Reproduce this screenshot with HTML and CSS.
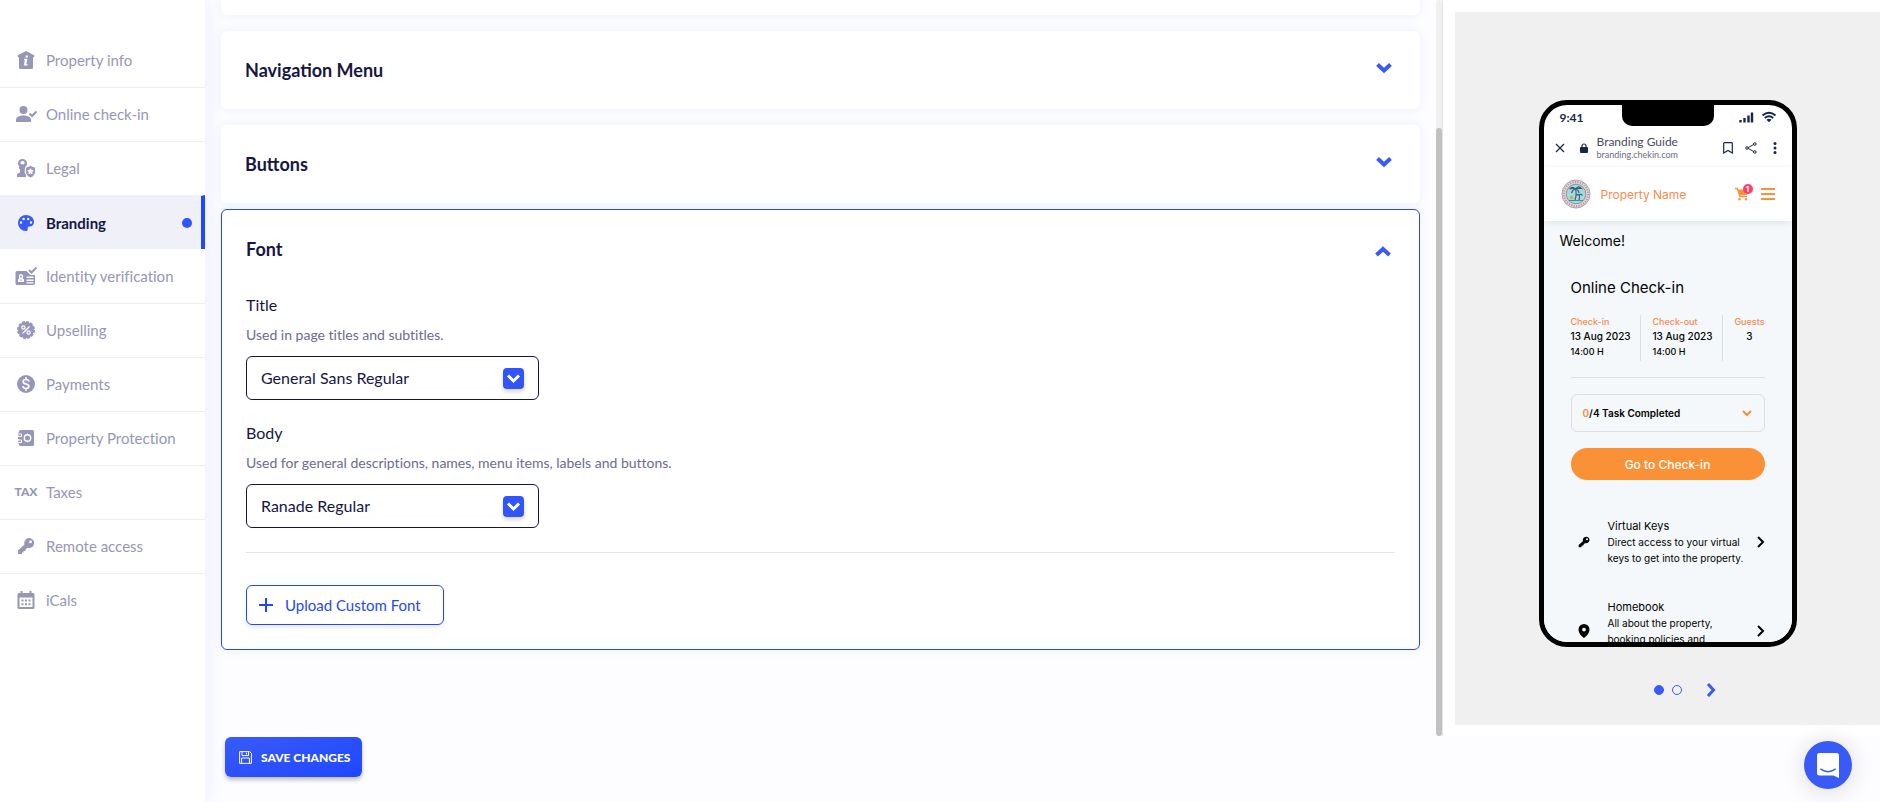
FILE: index.html
```html
<!DOCTYPE html>
<html lang="en">
<head>
    <meta charset="UTF-8">
    <meta name="viewport" content="width=device-width, initial-scale=1.0">
    <title>Branding</title>
    <link rel="stylesheet" href="styles.css">
</head>
<body>
    <nav class="sidebar">
        <a class="nav-item" href="#">
            <span class="nav-icon"><svg width="18" height="20" viewBox="0 0 18 20"><path fill="currentColor" fill-rule="evenodd" d="M9 1L0.800 5.200V7.200H2V17.500Q2 19 3.500 19H14.500Q16 19 16 17.500V7.200H17.200V5.200zM8.800 5.500h2.200l-.4 2H8.400zM7.200 8.700h3.300L9.400 14h1.200l-.3 1.500H6.800l1.100-5.300H6.900z"/></svg></span>
            Property info
        </a>
        <a class="nav-item" href="#">
            <span class="nav-icon"><svg width="22" height="18" viewBox="0 0 22 18"><circle cx="8.500" cy="5" r="4" fill="currentColor"/><path fill="currentColor" d="M1 17v-2c0-3 3-4.500 7.500-4.500S16 12 16 15v2z"/><path fill="none" stroke="currentColor" stroke-width="2" d="M14.500 8.500l2.500 2.500 4.500-4.500"/></svg></span>
            Online check-in
        </a>
        <a class="nav-item" href="#">
            <span class="nav-icon"><svg width="20" height="20" viewBox="0 0 20 20"><path fill="currentColor" fill-rule="evenodd" d="M6.500 1a4.600 4.600 0 0 1 4.600 4.500c0 1.500-.7 2.500-1.700 3.200L10 9v2H8.800v4l1.200 1v3H1v-3l3-1.500V11H3V9l.600-.3A4.400 4.400 0 0 1 1.900 5.500 4.600 4.600 0 0 1 6.500 1zm0 1.700L4.300 4l.5 2.300h3.400L8.700 4z"/><path fill="currentColor" stroke="#fff" fill-rule="evenodd" d="M14.500 7.500l5 1.900v4.300c0 3-2.200 5.200-5 6.200-2.800-1-5-3.200-5-6.200V9.400zm0 3.200l-.8 1.700-1.800.3 1.300 1.300-.3 1.800 1.600-.9 1.600.9-.3-1.800 1.300-1.300-1.800-.3z"/></svg></span>
            Legal
        </a>
        <a class="nav-item active" href="#">
            <span class="nav-icon"><svg width="18" height="18" viewBox="0 0 18 18"><path fill="currentColor" fill-rule="evenodd" d="M9 1c4.600 0 8 3 8 7 0 2.800-1.800 4.500-4.300 4.500-1.600 0-2.200.6-2 1.900.2 1.500-.2 2.600-1.700 2.600a8 8 0 0 1 0-16zM4 7.300a1.200 1.200 0 1 0 0 2.500 1.200 1.200 0 0 0 0-2.500zm2.600-3.600a1.200 1.200 0 1 0 0 2.500 1.200 1.200 0 0 0 0-2.500zm4.600 0a1.200 1.200 0 1 0 0 2.500 1.200 1.200 0 0 0 0-2.500zM14 7.300a1.200 1.200 0 1 0 0 2.500 1.200 1.200 0 0 0 0-2.500z"/></svg></span>
            Branding
            <span class="nav-dot"></span>
        </a>
        <a class="nav-item" href="#">
            <span class="nav-icon"><svg width="22" height="20" viewBox="0 0 22 20"><path fill="currentColor" fill-rule="evenodd" d="M2 5h9.500l4 4H20v8.500q0 1.500-1.500 1.500H2Q.500 19 .500 17.500v-11Q.500 5 2 5zm4 3a2.300 2.300 0 0 0-1.500 4L3 13.500V16h6v-2.500L7.500 12A2.300 2.300 0 0 0 6 8zm0 1.500a1 1 0 1 1 0 2 1 1 0 0 1 0-2zM4.500 14.500L6 13.200l1.500 1.300zM11.500 10.500V12h7v-1.500zm0 3V15h7v-1.500zm0 2.800v1.200h7v-1.200z"/><path fill="none" stroke="currentColor" stroke-width="2" d="M14 4l2.500 2.500L21.300 1.500"/></svg></span>
            Identity verification
        </a>
        <a class="nav-item" href="#">
            <span class="nav-icon"><svg width="20" height="20" viewBox="0 0 20 20"><circle cx="10" cy="10" r="8" fill="currentColor"/><circle cx="10" cy="10" r="7.800" fill="none" stroke="currentColor" stroke-width="2.400" stroke-dasharray="2.800 1.280"/><path d="M6.500 13.500l7-7" stroke="#fff" stroke-width="1.300"/><circle cx="7.400" cy="7.500" r="1.600" fill="none" stroke="#fff" stroke-width="1.200"/><circle cx="12.600" cy="12.500" r="1.600" fill="none" stroke="#fff" stroke-width="1.200"/></svg></span>
            Upselling
        </a>
        <a class="nav-item" href="#">
            <span class="nav-icon"><svg width="20" height="20" viewBox="0 0 20 20"><circle cx="10" cy="10" r="9" fill="currentColor"/><path d="M13 7.500C12.700 6 11.500 5.500 10 5.500S7.200 6.200 7.200 7.700c0 3.200 5.700 1.500 5.700 4.600 0 1.500-1.400 2.200-2.900 2.200s-2.900-.7-3.100-2.300M10 3.300v2.200M10 14.500v2.200" fill="none" stroke="#fff" stroke-width="1.700"/></svg></span>
            Payments
        </a>
        <a class="nav-item" href="#">
            <span class="nav-icon"><svg width="18" height="18" viewBox="0 0 18 18"><path fill="currentColor" d="M3.500 1H15.500Q17 1 17 2.500v13q0 1.500-1.500 1.500H3.500Q2 17 2 15.500V14.500H1v-3h1V10.500H1v-3h1V6.500H1v-3h1V2.500Q2 1 3.500 1z"/><circle cx="10.500" cy="9" r="3.200" fill="none" stroke="#fff" stroke-width="1.400"/><path stroke="#fff" fill="none" d="M10.500 4.500v1.500M10.500 12v1.500M1 5h3.500v2.500H1M1 11h3.500v2.500H1"/></svg></span>
            Property Protection
        </a>
        <a class="nav-item" href="#">
            <span class="nav-icon nav-icon-text">TAX</span>
            Taxes
        </a>
        <a class="nav-item" href="#">
            <span class="nav-icon"><svg width="18" height="18" viewBox="0 0 18 18"><path fill="currentColor" fill-rule="evenodd" d="M12 1a5 5 0 1 1-1.500 9.700L8.500 12.500V14H6.500v1.500H5V17H1v-3.500l6.500-6A5 5 0 0 1 12 1zm1.500 2.300a1.500 1.500 0 1 0 0 3 1.500 1.500 0 0 0 0-3z"/></svg></span>
            Remote access
        </a>
        <a class="nav-item" href="#">
            <span class="nav-icon"><svg width="18" height="20" viewBox="0 0 18 20"><path fill="currentColor" fill-rule="evenodd" d="M3.500 1h2v2h7V1h2v2H16q1.500 0 1.500 1.500v13Q17.500 19 16 19H2Q.500 19 .500 17.500v-13Q.500 3 2 3h1.500zM2.500 7.500V17h13V7.500z"/><path stroke="currentColor" stroke-width="2" stroke-dasharray="2 1.500" d="M4.500 10.500h9M4.500 14.200h9"/></svg></span>
            iCals
        </a>
    </nav>

    <div class="page">
        <div class="workspace">
            <main class="sections">
                <section class="card card-clipped"></section>
                <section class="card">
                    <button type="button" class="card-header">
                        Navigation Menu
                        <svg class="chevron" width="18" height="12" viewBox="0 0 18 12"><path d="M2.500 2.500L9 8.500l6.500-6"/></svg>
                    </button>
                </section>
                <section class="card">
                    <button type="button" class="card-header">
                        Buttons
                        <svg class="chevron" width="18" height="12" viewBox="0 0 18 12"><path d="M2.500 2.500L9 8.500l6.500-6"/></svg>
                    </button>
                </section>
                <section class="card card-open">
                    <button type="button" class="card-header">
                        Font
                        <svg class="chevron" width="18" height="12" viewBox="0 0 18 12"><path d="M2.500 10L9 4l6.500 6"/></svg>
                    </button>
                    <div class="card-body">
                        <div class="field">
                            <label for="title-font">Title</label>
                            <p class="hint">Used in page titles and subtitles.</p>
                            <div class="select">
                                <select id="title-font">
                                    <option>General Sans Regular</option>
                                </select>
                                <span class="select-arrow"><svg width="15" height="11" viewBox="0 0 15 11"><path d="M2 2.500l5.500 5.500L13 2.500"/></svg></span>
                            </div>
                        </div>
                        <div class="field">
                            <label for="body-font">Body</label>
                            <p class="hint">Used for general descriptions, names, menu items, labels and buttons.</p>
                            <div class="select">
                                <select id="body-font">
                                    <option>Ranade Regular</option>
                                </select>
                                <span class="select-arrow"><svg width="15" height="11" viewBox="0 0 15 11"><path d="M2 2.500l5.500 5.500L13 2.500"/></svg></span>
                            </div>
                        </div>
                        <hr class="divider">
                        <button type="button" class="upload-button">
                            <svg width="14" height="14" viewBox="0 0 14 14"><path d="M7 0v14M0 7h14" stroke="currentColor" stroke-width="2"/></svg>
                            Upload Custom Font
                        </button>
                    </div>
                </section>
            </main>
            <div class="scrollbar"><div class="scrollbar-thumb"></div></div>

            <aside class="preview">
                <div class="preview-stage">
                    <div class="phone">
                        <div class="notch"></div>
                        <div class="status-bar">
                            <span>9:41</span>
                            <svg width="38" height="12" viewBox="0 0 38 12"><path d="M1.500 11.500V9M5.500 11.500V7M9.500 11.500V4.500M13 11.500V1.500" stroke="#16264a" stroke-width="2.400" stroke-linecap="butt"/><path d="M23.500 4.500Q30 -1 36.500 4.500M25.800 7Q30 3.500 34.200 7" fill="none" stroke="#16264a" stroke-width="2"/><path d="M27.500 8.700Q30 6.800 32.500 8.700L30 11.300z" fill="#16264a"/></svg>
                        </div>
                        <div class="browser-bar">
                            <svg width="10" height="10" viewBox="0 0 10 10"><path d="M1 1l8 8M9 1L1 9" stroke="#16264a" stroke-width="1.200"/></svg>
                            <svg class="lock" width="8" height="10" viewBox="0 0 8 10"><rect y="4" width="8" height="6" rx="1" fill="#16264a"/><path d="M2 4.500V3a2 2 0 0 1 4 0v1.500" fill="none" stroke="#16264a" stroke-width="1.200"/></svg>
                            <div class="browser-title">
                                <div>Branding Guide</div>
                                <div class="browser-url">branding.chekin.com</div>
                            </div>
                            <svg width="10" height="12" viewBox="0 0 10 12"><path d="M.700 1.500Q.700.700 1.500.700h7q.8 0 .8.8v9.500L5 8.500.700 11z" fill="none" stroke="#16264a" stroke-width="1.200"/></svg>
                            <svg width="12" height="12" viewBox="0 0 12 12"><path d="M9.500 2L2.500 6l7 4" fill="none" stroke="#16264a"/><g fill="#fff" stroke="#16264a"><circle cx="9.800" cy="2" r="1.300"/><circle cx="2" cy="6" r="1.300"/><circle cx="9.800" cy="10" r="1.300"/></g></svg>
                            <svg class="kebab" width="4" height="12" viewBox="0 0 4 12"><g fill="#16264a"><circle cx="2" cy="1.600" r="1.500"/><circle cx="2" cy="6" r="1.500"/><circle cx="2" cy="10.400" r="1.500"/></g></svg>
                        </div>
                        <div class="property-bar">
                            <svg width="30" height="30" viewBox="0 0 30 30"><circle cx="15" cy="15" r="14" fill="#ecd3d4" stroke="#a3a6ae"/><circle cx="15" cy="15" r="12" fill="none" stroke="#b39aa4" stroke-width="2" stroke-dasharray="1.200 1.300"/><circle cx="15" cy="15" r="9.800" fill="#a3dadd" stroke="#7f9aa3"/><path d="M14 21q2-6 .5-11M14.500 10q-3-3-6 0 3-1 6 0M14.500 10q3-4 6-.5-3-.5-6 .5M14.500 10q-3 .5-4 4M14.500 10q3 .5 3.500 4M18 21q1-3 0-6M18 16q2-1.500 3.500.5M18 16q-2-1-3 .5" fill="none" stroke="#3f6078" stroke-width="1.200"/><circle cx="10.500" cy="18.500" r="1.800" fill="#d9a35a"/><path d="M8 21.500h14" stroke="#4a8b9c"/></svg>
                            <span class="property-name">Property Name</span>
                            <div class="cart">
                                <svg width="14" height="14" viewBox="0 0 14 14"><path d="M0 1.500h2.200L5 9.700h7" fill="none" stroke="#fa9137" stroke-width="1.300"/><path d="M2.800 2.500H13l-1 5.500-7.500.6z" fill="#fa9137"/><circle cx="4.500" cy="12.300" r="1.200" fill="#fa9137"/><circle cx="11" cy="12.300" r="1.200" fill="#fa9137"/></svg>
                                <span class="cart-badge">1</span>
                            </div>
                            <svg width="14" height="12" viewBox="0 0 14 12"><path d="M0 1h14M0 6h14M0 11h14" stroke="#fa9137" stroke-width="1.800"/></svg>
                        </div>
                        <div class="guest-page">
                            <p class="welcome">Welcome!</p>
                            <div class="guest-content">
                                <h2>Online Check-in</h2>
                                <div class="stay">
                                    <div class="stay-cell"><span class="stay-label">Check-in</span><span>13 Aug 2023</span><span class="stay-time">14:00 H</span></div>
                                    <div class="stay-cell"><span class="stay-label">Check-out</span><span>13 Aug 2023</span><span class="stay-time">14:00 H</span></div>
                                    <div class="stay-cell stay-guests"><span class="stay-label">Guests</span><span>3</span></div>
                                </div>
                                <div class="tasks">
                                    <span><span class="accent">0</span>/4 Task Completed</span>
                                    <svg width="10" height="7" viewBox="0 0 10 7"><path d="M1 1l4 4 4-4" fill="none" stroke="#fa9137" stroke-width="2"/></svg>
                                </div>
                                <button type="button" class="checkin-button">Go to Check-in</button>
                                <div class="guest-link">
                                    <svg width="12" height="12" viewBox="0 0 18 18"><path fill-rule="evenodd" d="M12 1a5 5 0 1 1-1.500 9.700L8.500 12.500V14H6.500v1.500H5V17H1v-3.500l6.500-6A5 5 0 0 1 12 1zm1.500 2.300a1.500 1.500 0 1 0 0 3 1.500 1.500 0 0 0 0-3z"/></svg>
                                    <div class="guest-link-text">
                                        <h3>Virtual Keys</h3>
                                        <p>Direct access to your virtual keys to get into the property.</p>
                                    </div>
                                    <svg width="8" height="12" viewBox="0 0 8 12"><path d="M1 1l5 5-5 5" fill="none" stroke="#000" stroke-width="2"/></svg>
                                </div>
                                <div class="guest-link guest-link-tall">
                                    <svg width="12" height="14" viewBox="0 0 12 14"><path fill-rule="evenodd" d="M6 0a5.500 5.500 0 0 1 5.500 5.500C11.500 9.500 7.500 13 6 14 4.500 13 .500 9.500.500 5.500A5.500 5.500 0 0 1 6 0zm0 3.700a1.900 1.900 0 1 0 0 3.800 1.900 1.900 0 0 0 0-3.800z"/></svg>
                                    <div class="guest-link-text">
                                        <h3>Homebook</h3>
                                        <p>All about the property, booking policies and</p>
                                    </div>
                                    <svg width="8" height="12" viewBox="0 0 8 12"><path d="M1 1l5 5-5 5" fill="none" stroke="#000" stroke-width="2"/></svg>
                                </div>
                            </div>
                        </div>
                    </div>
                    <div class="pager">
                        <button type="button" class="pager-dot current" aria-label="Screen 1"></button>
                        <button type="button" class="pager-dot" aria-label="Screen 2"></button>
                        <button type="button" class="pager-next" aria-label="Next screen"><svg width="10" height="16" viewBox="0 0 10 16"><path d="M2 2l5.500 6L2 14" fill="none" stroke="#385bf8" stroke-width="3"/></svg></button>
                    </div>
                </div>
            </aside>
        </div>
        <footer class="footer">
            <button type="button" class="save-button">
                <svg width="13" height="13" viewBox="0 0 13 13"><path d="M.600.600h10l1.800 1.800v10H.600zM3 .600v4h6.500v-4M2.600 12.400V7h7.800v5.400M7.500 1.500v2" fill="none" stroke="#fff"/></svg>
                SAVE CHANGES
            </button>
        </footer>
    </div>

    <button type="button" class="chat-button" aria-label="Open chat">
        <svg width="22" height="25" viewBox="0 0 22 25"><path d="M2.500 0h17Q22 0 22 2.500V25l-5.500-2.500h-14Q0 22.500 0 20V2.500Q0 0 2.500 0z" fill="#fff"/><path d="M3.800 16.200q7.200 5 14.400 0" fill="none" stroke="#385bf8" stroke-width="1.500" stroke-linecap="round"/></svg>
    </button>
</body>
</html>
```
FILE: styles.css
```css
* {
    box-sizing: border-box;
}

body {
    font-family: Lato, "Liberation Sans", sans-serif;
    font-variant-ligatures: none;
    background-color: #fdfdff;
    color: #161643;
    margin: 0;
    display: flex;
    min-height: 100vh;
}

button {
    font-family: inherit;
    cursor: pointer;
}

h2,
h3,
p {
    margin: 0;
}

/* Sidebar */
.sidebar {
    width: 205px;
    flex-shrink: 0;
    padding-top: 33px;
    background-color: #fff;
    box-shadow: 0 0 20px #e6eafc;
}

.nav-item {
    display: flex;
    align-items: center;
    gap: 9px;
    height: 54px;
    padding-left: 15px;
    padding-bottom: 2px;
    border-top: 1px solid #eeeef2;
    color: #9696b9;
    font-size: 15px;
    text-decoration: none;
}

.nav-item:first-child,
.nav-item.active + .nav-item {
    border-top-color: transparent;
}

.nav-icon {
    width: 22px;
    display: flex;
    justify-content: center;
}

.nav-icon-text {
    font-size: 12px;
    font-weight: 900;
}

.nav-item.active {
    padding-bottom: 0;
    background-color: #eff0f8;
    border-top-color: #eff0f8;
    border-right: 4px solid #1f47ff;
    color: #161643;
    font-weight: 700;
}

.nav-item.active .nav-icon {
    color: #385bf8;
}

.nav-dot {
    width: 10px;
    height: 10px;
    margin-left: auto;
    margin-right: 9px;
    border-radius: 50%;
    background-color: #2f55fb;
}

/* Settings column */
.page {
    flex: 1;
    min-width: 0;
    display: flex;
    flex-direction: column;
}

.workspace {
    display: flex;
    height: calc(100vh - 66px);
}

.sections {
    flex: 1;
    padding: 0 16px;
    overflow: hidden;
}

.card {
    margin-bottom: 16px;
    border-radius: 6px;
    background-color: #fff;
    box-shadow: 0 0 12px #eceffd;
}

.card-clipped {
    height: 15px;
    border-radius: 0 0 6px 6px;
}

.card-header {
    display: flex;
    justify-content: space-between;
    align-items: center;
    width: 100%;
    height: 78px;
    padding: 0 27px 0 24px;
    border: none;
    background: none;
    color: #161643;
    font-size: 18px;
    font-weight: 700;
}

.chevron {
    margin-bottom: 4px;
}

.chevron path {
    fill: none;
    stroke: #385bf8;
    stroke-width: 4;
}

.card-open {
    margin-top: -10px;
    border: 1px solid #1f47ff;
}

.card-open .chevron {
    margin-top: 4px;
    margin-bottom: 0;
}

.card-body {
    padding: 8px 24px 24px;
}

.field {
    margin-bottom: 24px;
}

.field label {
    display: block;
    font-size: 16px;
    line-height: 18px;
}

.hint {
    margin: 11px 0;
    color: #6b6b95;
    font-size: 14px;
    line-height: 20px;
}

.select {
    position: relative;
    width: 293px;
}

.select select {
    width: 100%;
    height: 44px;
    padding: 0 60px 2px 14px;
    appearance: none;
    border: 1px solid #161643;
    border-radius: 6px;
    background-color: #fff;
    color: #161643;
    font-family: inherit;
    font-size: 16px;
}

.select-arrow {
    position: absolute;
    top: 12px;
    right: 15px;
    display: flex;
    justify-content: center;
    align-items: center;
    width: 21px;
    height: 21px;
    border-radius: 4px;
    background-color: #2f55fb;
    box-shadow: 0 3px 4px rgba(0, 0, 0, 0.15);
    pointer-events: none;
}

.select-arrow path {
    fill: none;
    stroke: #fff;
    stroke-width: 3;
}

.divider {
    margin: 0 0 32px;
    border: none;
    border-top: 1px solid #e2e2ea;
}

.upload-button {
    display: flex;
    align-items: center;
    gap: 12px;
    height: 40px;
    padding: 0 22px 0 12px;
    border: 1px solid #1f47ff;
    border-radius: 6px;
    background-color: #fff;
    box-shadow: 0 3px 4px rgba(0, 0, 0, 0.07);
    color: #1f47ff;
    font-size: 15px;
}

.scrollbar {
    width: 6px;
    padding-top: 128px;
    border-radius: 3px;
    background-color: #f1f1f1;
}

.scrollbar-thumb {
    height: 100%;
    border-radius: 3px;
    background-color: #c1c1c1;
}

.footer {
    padding-top: 1px;
    padding-left: 20px;
}

.save-button {
    display: flex;
    align-items: center;
    gap: 9px;
    height: 40px;
    padding: 0 12px 0 14px;
    border: none;
    border-radius: 6px;
    background: linear-gradient(160deg, #385bf8, #1f47ff);
    box-shadow: 0 3px 4px rgba(0, 0, 0, 0.25);
    color: #fff;
    font-size: 12px;
    font-weight: 900;
}

/* Phone preview */
.preview {
    width: 438px;
    padding: 12px 0 11px 12px;
    border-left: 1px solid #e2e2ea;
    background-color: #fff;
}

.preview-stage {
    display: flex;
    flex-direction: column;
    align-items: center;
    height: 100%;
    padding-top: 88px;
    background-color: #f0f0f0;
}

.phone {
    position: relative;
    display: flex;
    flex-direction: column;
    width: 258px;
    height: 547px;
    border: 5px solid #000;
    border-radius: 28px;
    background-color: #fff;
    color: #000;
    font-family: Inter, sans-serif;
    font-size: 10px;
    overflow: hidden;
}

.notch {
    position: absolute;
    top: -1px;
    left: 78px;
    width: 92px;
    height: 22px;
    border-radius: 0 0 10px 10px;
    background-color: #000;
}

.status-bar {
    display: flex;
    justify-content: space-between;
    align-items: center;
    height: 24px;
    padding: 0 15px 0 16px;
    color: #16264a;
    font-family: Lato, sans-serif;
    font-size: 12px;
    font-weight: 700;
}

.browser-bar {
    display: flex;
    align-items: center;
    gap: 12px;
    height: 38px;
    padding: 0 15px 0 11px;
    color: #4a4a60;
    font-family: Lato, sans-serif;
    font-size: 12px;
    line-height: 14px;
}

.browser-bar .lock {
    margin-left: 3px;
}

.browser-title {
    flex: 1;
    margin-left: -3px;
}

.browser-url {
    color: #6b6b80;
    font-size: 9px;
    line-height: 12px;
}

.kebab {
    margin-left: 4px;
}

.property-bar {
    display: flex;
    align-items: center;
    height: 54px;
    padding: 0 17px;
    box-shadow: 0 2px 6px #dfe4ea;
    z-index: 1;
}

.property-name {
    flex: 1;
    margin-left: 10px;
    color: #fa8a4d;
    font-size: 12px;
}

.cart {
    position: relative;
    display: flex;
    margin-right: 12px;
}

.cart-badge {
    position: absolute;
    top: -3px;
    right: -4px;
    width: 10px;
    height: 10px;
    border-radius: 50%;
    background-color: #ff3f73;
    color: #fff;
    font-size: 8px;
    font-weight: 600;
    line-height: 10px;
    text-align: center;
}

.guest-page {
    flex: 1;
    min-height: 0;
    padding: 11px 16px 0;
    background-color: #f4f8fa;
}

.welcome {
    font-size: 14px;
    line-height: 18px;
}

.guest-content {
    padding: 26px 11px 0;
}

.guest-content h2 {
    font-size: 15px;
    font-weight: 400;
    line-height: 24px;
}

.stay {
    display: flex;
    justify-content: space-between;
    margin-top: 15px;
    padding-bottom: 16px;
    border-bottom: 1px solid #dadfe1;
}

.stay-cell {
    display: flex;
    flex-direction: column;
    height: 46px;
    padding-right: 9px;
    border-right: 1px solid #dadfe1;
    font-weight: 500;
    line-height: 16px;
}

.stay-guests {
    align-items: center;
    padding-right: 0;
    border-right: none;
}

.stay-label {
    color: #fa8a4d;
    font-size: 9px;
    line-height: 13px;
}

.stay-time {
    font-size: 9px;
}

.accent {
    color: #fa8a4d;
}

.tasks {
    display: flex;
    justify-content: space-between;
    align-items: center;
    height: 38px;
    margin: 16px 0;
    padding: 0 12px 0 11px;
    border: 1px solid #dadfe1;
    border-radius: 6px;
    font-weight: 600;
}

.checkin-button {
    width: 100%;
    height: 32px;
    border: none;
    border-radius: 16px;
    background-color: #fa9137;
    color: #fff;
    font-size: 12px;
    font-weight: 500;
}

.guest-link {
    display: flex;
    align-items: center;
    margin: 38px 0 33px;
    padding-left: 7px;
}

.guest-link + .guest-link {
    margin-top: 0;
}

.guest-link-tall {
    height: 64px;
}

.guest-link-text {
    flex: 1;
    align-self: flex-start;
    margin-left: 18px;
    margin-right: 7px;
    line-height: 16px;
}

.guest-link-text h3 {
    font-size: 11px;
    font-weight: 400;
    line-height: 16px;
}

/* Pager */
.pager {
    display: flex;
    align-items: center;
    gap: 8px;
    margin-top: 35px;
    padding-left: 35px;
}

.pager-dot {
    width: 10px;
    height: 10px;
    padding: 0;
    border: 1px solid #385bf8;
    border-radius: 50%;
    background-color: transparent;
}

.pager-dot.current {
    background-color: #385bf8;
}

.pager-next {
    display: flex;
    margin-left: 16px;
    padding: 0;
    border: none;
    background: none;
}

.chat-button {
    position: fixed;
    right: 28px;
    bottom: 13px;
    display: flex;
    justify-content: center;
    align-items: center;
    width: 48px;
    height: 48px;
    padding: 0;
    border: none;
    border-radius: 50%;
    background-color: #385bf8;
    box-shadow: 0 2px 24px rgba(0, 0, 0, 0.15);
}
```
